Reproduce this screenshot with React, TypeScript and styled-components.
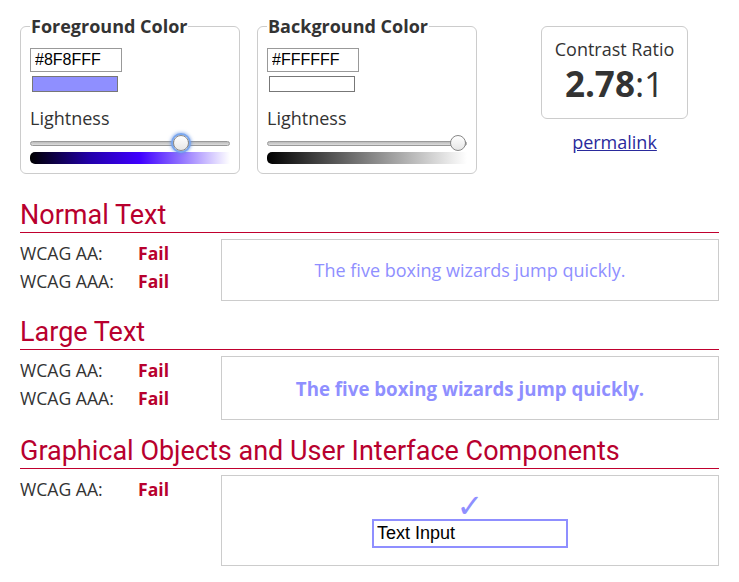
import React from "react";
import styled, { createGlobalStyle } from "styled-components";

const GlobalStyle = createGlobalStyle`
    body {
        margin: 0;
        background: #fff;
        font-family: "Open Sans", sans-serif;
        color: #333;
    }
`;

const Page = styled.div`
    width: 739px;
    padding: 15px 20px 0;
    box-sizing: border-box;
`;

const TopRow = styled.div`
    display: flex;
    align-items: flex-start;
    gap: 17px;
`;

const ColorFieldset = styled.fieldset`
    width: 220px;
    box-sizing: border-box;
    margin: 0;
    padding: 0 9px 9px;
    border: 1px solid #ccc;
    border-radius: 6px;
    min-inline-size: 0;
`;

const Legend = styled.legend`
    padding: 0 1px;
    font-size: 18px;
    font-weight: 700;
    line-height: 22px;
    color: #333;
`;

const HexInput = styled.input`
    display: block;
    width: 92px;
    height: 24px;
    box-sizing: border-box;
    margin: 11px 0 0;
    padding: 0 4px;
    border: 1px solid #999;
    font-family: "Liberation Sans", Arial, sans-serif;
    font-size: 16px;
    color: #000;
`;

const Swatch = styled.div<{ $color: string }>`
    width: 86px;
    height: 16px;
    box-sizing: border-box;
    margin: 4px 0 0 2px;
    border: 1px solid #777;
    background: ${(p) => p.$color};
`;

const Label = styled.div`
    margin-top: 14px;
    font-size: 18px;
    line-height: 24px;
    color: #333;
`;

const Slider = styled.input<{ $focus?: boolean }>`
    -webkit-appearance: none;
    appearance: none;
    display: block;
    width: 200px;
    height: 16px;
    margin: 5px 0 1px;
    background: transparent;

    &::-webkit-slider-runnable-track {
        height: 5px;
        border-radius: 3px;
        border: 1px solid #999;
        background: linear-gradient(#bbb, #ddd);
    }
    &::-webkit-slider-thumb {
        -webkit-appearance: none;
        width: 16px;
        height: 16px;
        margin-top: -7px;
        border-radius: 50%;
        border: 1px solid #888;
        background: linear-gradient(#fff, #e6e6e6);
        box-shadow: ${(p) => (p.$focus ? "0 0 0 2px #7aa7ee, 0 0 3px 3px rgba(90,140,230,0.5)" : "none")};
    }
`;

const GradientBar = styled.div<{ $gradient: string }>`
    width: 200px;
    height: 12px;
    border-radius: 5px 0 0 5px;
    background: ${(p) => p.$gradient};
`;

const RatioColumn = styled.div`
    display: flex;
    flex-direction: column;
    align-items: center;
    margin: 11px 0 0 47px;
`;

const RatioBox = styled.div`
    width: 147px;
    height: 93px;
    box-sizing: border-box;
    border: 1px solid #ccc;
    border-radius: 6px;
    padding-top: 10px;
    text-align: center;
`;

const RatioLabel = styled.div`
    font-size: 18px;
    line-height: 24px;
`;

const RatioValue = styled.div`
    font-size: 35px;
    line-height: 46px;
    color: #333;

    strong {
        font-weight: 700;
    }
`;

const Permalink = styled.a`
    margin-top: 11px;
    font-size: 18px;
    line-height: 24px;
    color: #2a2a9c;
    text-decoration: underline;
`;

const Section = styled.section<{ $gap: number }>`
    margin-top: ${(p) => p.$gap}px;
`;

const Heading = styled.h2`
    margin: 0 0 6px;
    padding-bottom: 2px;
    border-bottom: 1px solid #c0002e;
    font-family: Roboto, sans-serif;
    font-size: 27px;
    font-weight: 400;
    line-height: 30px;
    color: #b8002e;
`;

const ResultRow = styled.div`
    display: flex;
    align-items: flex-start;
`;

const Verdicts = styled.div`
    width: 201px;
    flex-shrink: 0;
`;

const Verdict = styled.div`
    display: flex;
    font-size: 17.6px;
    line-height: 28px;
    color: #333;
`;

const Level = styled.span`
    width: 118px;
`;

const Fail = styled.span`
    font-weight: 700;
    color: #b8002e;
`;

const SampleBox = styled.div<{ $height: number }>`
    flex: 1;
    height: ${(p) => p.$height}px;
    box-sizing: border-box;
    border: 1px solid #ccc;
    display: flex;
    flex-direction: column;
    align-items: center;
    justify-content: center;
`;

const SampleText = styled.div<{ $large?: boolean }>`
    color: #8f8fff;
    font-size: ${(p) => (p.$large ? "18.7px" : "18px")};
    font-weight: ${(p) => (p.$large ? 700 : 400)};
`;

const Check = styled.div`
    font-family: "DejaVu Sans", sans-serif;
    font-size: 32px;
    line-height: 24px;
    color: #8f8fff;
`;

const DemoInput = styled.input`
    width: 196px;
    height: 29px;
    box-sizing: border-box;
    margin-top: 1px;
    padding: 0 3px;
    border: 2px solid #8f8fff;
    font-family: "Liberation Sans", Arial, sans-serif;
    font-size: 18px;
    color: #000;
    outline: none;
`;

const fgGradient = "linear-gradient(to right, #000 0%, #2200aa 30%, #4000ff 55%, #8f70ff 75%, #fff 100%)";
const bgGradient = "linear-gradient(to right, #000, #fff)";

function VerdictList({ levels }: { levels: string[] }) {
    return (
        <Verdicts>
            {levels.map((l) => (
                <Verdict key={l}>
                    <Level>WCAG {l}:</Level>
                    <Fail>Fail</Fail>
                </Verdict>
            ))}
        </Verdicts>
    );
}

export default function App() {
    return (
        <Page>
            <GlobalStyle />
            <TopRow>
                <ColorFieldset>
                    <Legend>Foreground Color</Legend>
                    <HexInput defaultValue="#8F8FFF" />
                    <Swatch $color="#8f8fff" />
                    <Label>Lightness</Label>
                    <Slider type="range" min={0} max={100} defaultValue={78} $focus />
                    <GradientBar $gradient={fgGradient} />
                </ColorFieldset>
                <ColorFieldset>
                    <Legend>Background Color</Legend>
                    <HexInput defaultValue="#FFFFFF" />
                    <Swatch $color="#ffffff" />
                    <Label>Lightness</Label>
                    <Slider type="range" min={0} max={100} defaultValue={100} />
                    <GradientBar $gradient={bgGradient} />
                </ColorFieldset>
                <RatioColumn>
                    <RatioBox>
                        <RatioLabel>Contrast Ratio</RatioLabel>
                        <RatioValue>
                            <strong>2.78</strong>:1
                        </RatioValue>
                    </RatioBox>
                    <Permalink href="#">permalink</Permalink>
                </RatioColumn>
            </TopRow>

            <Section $gap={26}>
                <Heading>Normal Text</Heading>
                <ResultRow>
                    <VerdictList levels={["AA", "AAA"]} />
                    <SampleBox $height={62}>
                        <SampleText>The five boxing wizards jump quickly.</SampleText>
                    </SampleBox>
                </ResultRow>
            </Section>

            <Section $gap={16}>
                <Heading>Large Text</Heading>
                <ResultRow>
                    <VerdictList levels={["AA", "AAA"]} />
                    <SampleBox $height={64}>
                        <SampleText $large>The five boxing wizards jump quickly.</SampleText>
                    </SampleBox>
                </ResultRow>
            </Section>

            <Section $gap={16}>
                <Heading>Graphical Objects and User Interface Components</Heading>
                <ResultRow>
                    <VerdictList levels={["AA"]} />
                    <SampleBox $height={91}>
                        <Check>✓</Check>
                        <DemoInput defaultValue="Text Input" />
                    </SampleBox>
                </ResultRow>
            </Section>
        </Page>
    );
}
